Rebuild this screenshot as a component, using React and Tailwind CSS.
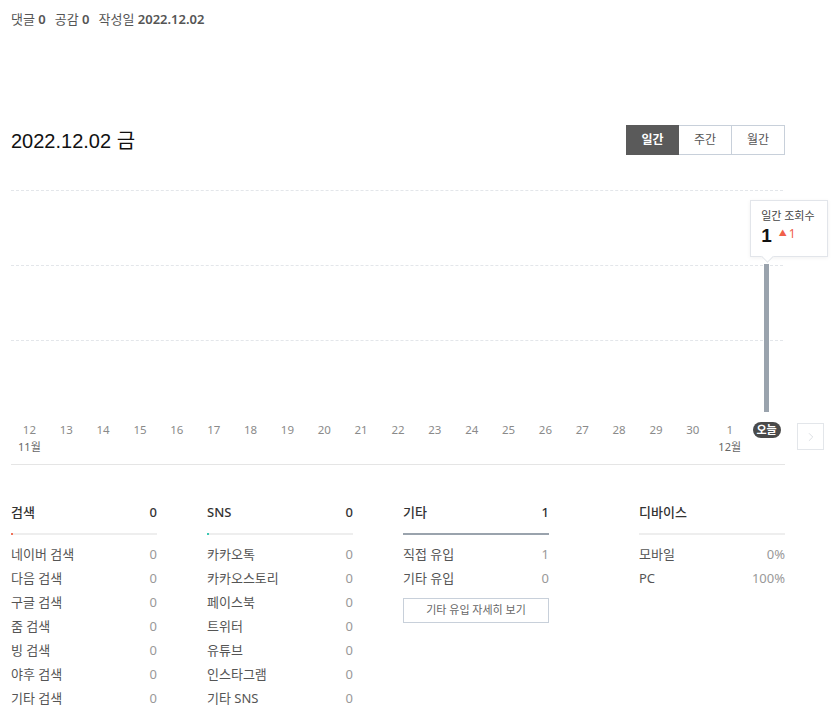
import { ChevronRight } from "lucide-react";

const days = ["12", "13", "14", "15", "16", "17", "18", "19", "20", "21", "22", "23", "24", "25", "26", "27", "28", "29", "30", "1"];

const groups = [
  {
    title: "검색",
    total: "0",
    bar: "bg-[#f0735a]",
    barWidth: "w-[2px]",
    rows: [
      ["네이버 검색", "0"],
      ["다음 검색", "0"],
      ["구글 검색", "0"],
      ["줌 검색", "0"],
      ["빙 검색", "0"],
      ["야후 검색", "0"],
      ["기타 검색", "0"],
    ],
  },
  {
    title: "SNS",
    total: "0",
    bar: "bg-[#3cc8b4]",
    barWidth: "w-[2px]",
    rows: [
      ["카카오톡", "0"],
      ["카카오스토리", "0"],
      ["페이스북", "0"],
      ["트위터", "0"],
      ["유튜브", "0"],
      ["인스타그램", "0"],
      ["기타 SNS", "0"],
    ],
  },
  {
    title: "기타",
    total: "1",
    bar: "bg-[#9aa3ad]",
    barWidth: "w-full",
    rows: [
      ["직접 유입", "1"],
      ["기타 유입", "0"],
    ],
    more: true,
  },
];

const font = "font-['Noto_Sans','Noto_Sans_CJK_KR',sans-serif]";

function StatColumn({ group }) {
  return (
    <div className="w-[146px]">
      <div className="flex h-[20px] items-center justify-between text-[13px] font-medium text-[#333]">
        <span>{group.title}</span>
        {group.total !== undefined && <span>{group.total}</span>}
      </div>
      <div className="mt-[10px] h-[2px] w-full bg-[#eeeeee]">
        {group.bar && <div className={`h-full ${group.barWidth} ${group.bar}`} />}
      </div>
      <ul className="mt-[8px]">
        {group.rows.map(([label, value]) => (
          <li key={label} className="flex h-[24px] items-center justify-between text-[13px]">
            <span className="text-[#555]">{label}</span>
            <span className="text-[#999]">{value}</span>
          </li>
        ))}
      </ul>
      {group.more && (
        <button
          type="button"
          className="mt-[7px] flex h-[25px] w-full items-center justify-center border border-[#c8d0da] text-[11px] text-[#666]"
        >
          기타 유입 자세히 보기
        </button>
      )}
    </div>
  );
}

export default function App() {
  return (
    <div className={`w-[834px] bg-white pl-[11px] ${font}`}>
      <p className="mt-[12px] flex h-[16px] items-center gap-[9px] text-[13px] text-[#555]">
        <span>
          댓글 <b className="font-semibold">0</b>
        </span>
        <span>
          공감 <b className="font-semibold">0</b>
        </span>
        <span>
          작성일 <b className="font-semibold">2022.12.02</b>
        </span>
      </p>

      <div className="mt-[95px] flex w-[774px] items-center justify-between">
        <h1 className="mt-[3px] font-['Liberation_Sans','Noto_Sans_CJK_KR',sans-serif] text-[20px] text-[#111]">2022.12.02 금</h1>
        <div className="flex h-[30px] text-[12px]">
          <button type="button" className="w-[53px] bg-[#5a5a5a] font-semibold text-white">일간</button>
          <button type="button" className="w-[53px] border border-l-0 border-[#c8d0da] text-[#555]">주간</button>
          <button type="button" className="w-[53px] border border-l-0 border-[#c8d0da] text-[#555]">월간</button>
        </div>
      </div>

      {/* daily views chart */}
      <div className="relative mt-[34px] h-[222px] w-[774px]">
        <div className="absolute inset-x-0 top-0 flex flex-col gap-[74px] pr-[2px]">
          <div className="border-t border-dashed border-[#e3e6ea]" />
          <div className="border-t border-dashed border-[#e3e6ea]" />
          <div className="border-t border-dashed border-[#e3e6ea]" />
        </div>
        <div className="relative grid h-full grid-cols-[repeat(21,minmax(0,1fr))] items-end">
          {days.map((d) => (
            <div key={d} />
          ))}
          <div className="relative flex h-[148px] justify-center">
            <div className="h-full w-[5px] bg-[#9aa3ad]" />
            <div className="absolute bottom-[155px] left-[2px] w-[78px] border border-[#e2e5ea] bg-white px-[10px] pt-[7px] pb-[9px] shadow-[0_1px_4px_rgba(0,0,0,0.06)]">
              <div className="text-[11px] leading-[16px] text-[#444]">일간 조회수</div>
              <div className="mt-[1px] flex items-start gap-[7px]">
                <span className="font-['Liberation_Sans',sans-serif] text-[19px] leading-[22px] font-bold text-[#111]">1</span>
                <span className="mt-[1px] text-[12px] leading-[14px] text-[#f0604a]">
                  <span className="mr-[2px] text-[8px] align-[2px]">▲</span>1
                </span>
              </div>
              <div className="absolute -bottom-[5px] left-[12px] h-[9px] w-[9px] rotate-45 border-r border-b border-[#e2e5ea] bg-white" />
            </div>
          </div>
        </div>
      </div>

      <div className="mt-[9px] flex items-start gap-[12px]">
        <div className="w-[774px]">
          <div className="grid grid-cols-[repeat(21,minmax(0,1fr))] text-[11.5px] text-[#8a8a8a]">
            {days.map((d) => (
              <div key={d} className="flex h-[18px] items-center justify-center">
                {d}
              </div>
            ))}
            <div className="flex h-[18px] items-center justify-center">
              <span className="flex h-[16px] w-[28px] items-center justify-center rounded-full bg-[#4a4a4a] text-[11px] font-bold text-white">
                오늘
              </span>
            </div>
          </div>
          <div className="grid h-[17px] grid-cols-[repeat(21,minmax(0,1fr))] text-[11px] text-[#666]">
            <div className="flex items-center justify-center">11월</div>
            {days.slice(1, 19).map((d) => (
              <div key={d} />
            ))}
            <div className="flex items-center justify-center">12월</div>
            <div />
          </div>
          <div className="mt-[8px] border-t border-[#e5e5e5]" />
        </div>
        <button
          type="button"
          className="mt-[2px] flex h-[27px] w-[27px] items-center justify-center border border-[#e3e6ea] text-[#d0d4da]"
        >
          <ChevronRight size={14} strokeWidth={1.25} />
        </button>
      </div>

      <div className="mt-[38px] flex w-[774px] items-start">
        <div className="flex gap-[50px]">
          {groups.map((g) => (
            <StatColumn key={g.title} group={g} />
          ))}
        </div>
        <div className="ml-auto">
          <StatColumn
            group={{
              title: "디바이스",
              rows: [
                ["모바일", "0%"],
                ["PC", "100%"],
              ],
            }}
          />
        </div>
      </div>
    </div>
  );
}
